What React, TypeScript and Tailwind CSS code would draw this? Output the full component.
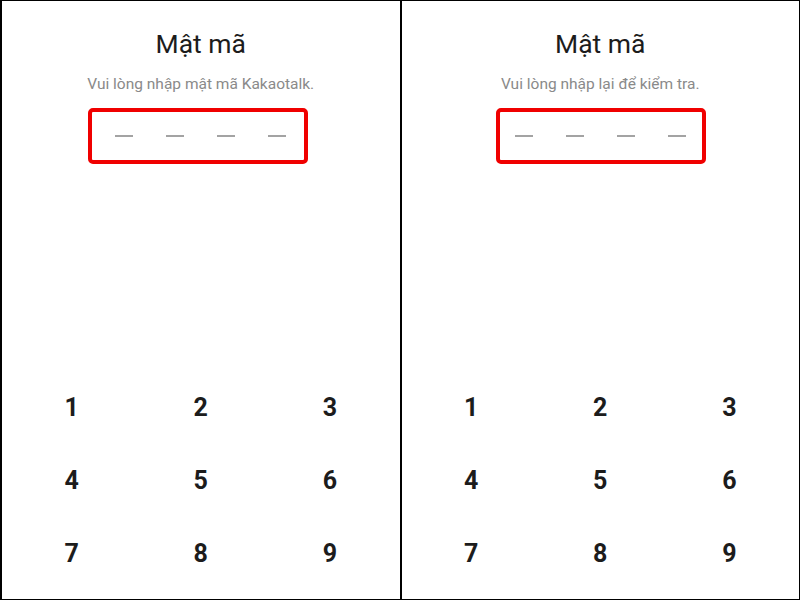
import React from 'react';

interface PanelProps {
  subtitle: string;
  boxClass: string;
  divider?: boolean;
}

const keys = ['1', '2', '3', '4', '5', '6', '7', '8', '9'];

const PasscodePanel: React.FC<PanelProps> = ({ subtitle, boxClass, divider }) => {
  return (
    <div
      className={`flex-1 h-full flex flex-col overflow-hidden bg-white ${
        divider ? 'border-r-2 border-black' : ''
      }`}
    >
      {/* Title */}
      <h1 className="shrink-0 mt-[26px] text-center text-[26.5px] leading-[34px] font-normal text-[#1c1c1c]">
        Mật mã
      </h1>
      <p className="shrink-0 mt-[13px] text-center text-[15.5px] leading-[20px] text-[#8a8a8a]">
        {subtitle}
      </p>

      {/* Code slots */}
      <div
        className={`shrink-0 mt-[14px] h-[56px] border-4 border-[#f00000] rounded-[5px] flex items-center gap-[33px] ${boxClass}`}
      >
        {[0, 1, 2, 3].map((i) => (
          <span key={i} className="block w-[18px] h-[2px] bg-[#a3a3a3]" />
        ))}
      </div>

      {/* Keypad */}
      <div className="shrink-0 mt-[207px] px-[5px] grid grid-cols-3">
        {keys.map((k) => (
          <div
            key={k}
            className="h-[73px] flex items-center justify-center text-[25px] font-bold text-[#1c1c1c]"
          >
            {k}
          </div>
        ))}
      </div>
    </div>
  );
};

export default function App() {
  return (
    <div
      className="w-[800px] h-[600px] flex border border-l-2 border-black bg-white overflow-hidden"
      style={{ fontFamily: 'Roboto, "Noto Sans", sans-serif' }}
    >
      <PasscodePanel
        subtitle="Vui lòng nhập mật mã Kakaotalk."
        boxClass="ml-[86px] w-[220px] pl-[23px]"
        divider
      />
      <PasscodePanel
        subtitle="Vui lòng nhập lại để kiểm tra."
        boxClass="ml-[94px] w-[210px] pl-[15px]"
      />
    </div>
  );
}
